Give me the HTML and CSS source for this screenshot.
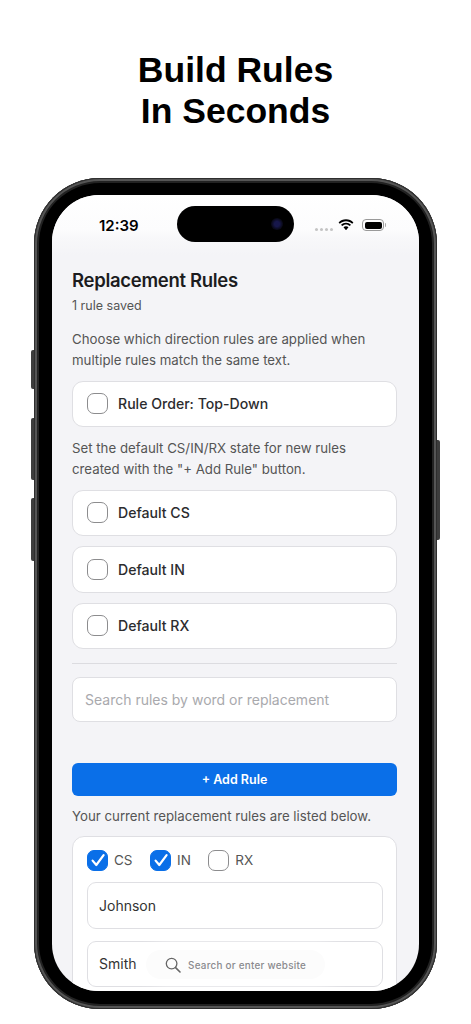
FILE: index.html
```html
<!DOCTYPE html>
<html lang="en">
<head>
<meta charset="utf-8">
<title>Build Rules In Seconds</title>
<link rel="stylesheet" href="styles.css">
</head>
<body>
<h1 class="headline">Build Rules<br>In Seconds</h1>
<div class="phone">
  <span class="side-btn btn-action"></span>
  <span class="side-btn btn-up"></span>
  <span class="side-btn btn-down"></span>
  <span class="side-btn btn-power"></span>
  <div class="bezel">
    <div class="screen">
      <div class="island"><span class="lens"></span></div>
      <div class="statusbar">
        <span class="time">12:39</span>
        <div class="status-right">
          <span class="signal"><i></i><i></i><i></i><i></i></span>
          <svg class="wifi" viewBox="0 0 16 12" width="16" height="12"><path d="M8 2.200c2.400 0 4.600.9 6.200 2.500l1.200-1.300C13.500 1.400 10.900.3 8 .3S2.500 1.400.6 3.400l1.200 1.300C3.400 3.100 5.600 2.200 8 2.200z"/><path d="M8 5.600c1.400 0 2.800.6 3.800 1.500l1.200-1.300C11.700 4.500 9.900 3.700 8 3.700s-3.700.8-5 2.100l1.200 1.300c1-.9 2.400-1.500 3.800-1.500z"/><path d="M8 7.200c-1 0-1.800.4-2.500 1L8 11.300l2.500-3.100c-.7-.6-1.500-1-2.500-1z"/></svg>
          <span class="battery"><span class="battery-fill"></span></span>
        </div>
      </div>
      <main class="content">
        <h2 class="title">Replacement Rules</h2>
        <p class="saved">1 rule saved</p>
        <p class="desc">Choose which direction rules are applied when multiple rules match the same text.</p>
        <label class="option"><span class="box"></span>Rule Order: Top-Down</label>
        <p class="desc desc-set">Set the default CS/IN/RX state for new rules<br>created with the "+ Add Rule" button.</p>
        <div class="options">
          <label class="option"><span class="box"></span>Default CS</label>
          <label class="option"><span class="box"></span>Default IN</label>
          <label class="option"><span class="box"></span>Default RX</label>
        </div>
        <hr class="rule">
        <div class="search-field">Search rules by word or replacement</div>
        <button class="add">+ Add Rule</button>
        <p class="desc desc-list">Your current replacement rules are listed below.</p>
        <section class="rule-card">
          <div class="flags">
            <span class="flag"><span class="box small on"><svg viewBox="0 0 16 16" width="16" height="16"><path d="M2.600 8.600 6.300 13 13.600 3.200" fill="none" stroke="#fff" stroke-width="2.200" stroke-linecap="round" stroke-linejoin="round"/></svg></span>CS</span>
            <span class="flag"><span class="box small on"><svg viewBox="0 0 16 16" width="16" height="16"><path d="M2.600 8.600 6.300 13 13.600 3.200" fill="none" stroke="#fff" stroke-width="2.200" stroke-linecap="round" stroke-linejoin="round"/></svg></span>IN</span>
            <span class="flag"><span class="box small"></span>RX</span>
          </div>
          <div class="value">Johnson</div>
          <div class="value">Smith</div>
        </section>
      </main>
      <div class="url-bar">
        <svg class="magnifier" viewBox="0 0 16 16" width="16" height="16"><circle cx="6.600" cy="6.600" r="5.300" fill="none" stroke="#666" stroke-width="1.300"/><path d="M10.600 10.600 15 15" stroke="#666" stroke-width="1.600" stroke-linecap="round"/></svg>
        <span>Search or enter website</span>
      </div>
    </div>
  </div>
</div>
</body>
</html>
```
FILE: styles.css
```css
* { box-sizing: border-box; }
html, body { margin: 0; padding: 0; }
body {
  width: 471px;
  height: 1024px;
  overflow: hidden;
  background: #fff;
  font-family: Inter, "Liberation Sans", sans-serif;
  color: #1c1c1e;
}
.headline {
  margin: 0;
  padding-top: 50px;
  height: 178px;
  text-align: center;
  font-family: "Liberation Sans", Arial, sans-serif;
  font-size: 35.500px;
  line-height: 41px;
  font-weight: 700;
  color: #000;
}
.phone {
  position: relative;
  margin-left: 34px;
  width: 403px;
  height: 831px;
}
.bezel {
  width: 100%;
  height: 100%;
  padding: 17px 18px 18px;
  border-radius: 66px;
  background: #000;
  box-shadow: inset 0 0 0 1px #2e2e2e, inset 0 0 0 3px #555, inset 0 0 0 5px #222;
}
.side-btn {
  position: absolute;
  width: 3px;
  left: -3px;
  background: #3d3d3d;
  border-radius: 2px 0 0 2px;
}
.btn-action { top: 172px; height: 39px; }
.btn-up { top: 240px; height: 62px; }
.btn-down { top: 320px; height: 63px; }
.btn-power { left: 403px; top: 262px; height: 100px; border-radius: 0 2px 2px 0; }
.screen {
  position: relative;
  width: 367px;
  height: 796px;
  border-radius: 47px;
  overflow: hidden;
  background: #f4f4f7;
}
.island {
  position: absolute;
  top: 11px;
  left: 125px;
  width: 117px;
  height: 36px;
  border-radius: 18px;
  background: #000;
}
.lens {
  position: absolute;
  top: 12px;
  right: 11px;
  width: 12px;
  height: 12px;
  border-radius: 50%;
  background: radial-gradient(circle, #17174a 0 30%, #0b0b1e 60%, #000 100%);
}
.statusbar {
  display: flex;
  justify-content: space-between;
  align-items: center;
  height: 60px;
  padding: 0 35px 0 47px;
  background: linear-gradient(#fff 0, #fcfcfd 34px, #f8f8fa 42px, #f4f4f7 60px);
}
.time {
  font-size: 15px;
  font-weight: 600;
  color: #000;
}
.status-right { display: flex; align-items: center; }
.signal { display: flex; gap: 2px; margin-right: 5px; margin-top: 8px; }
.signal i { width: 3px; height: 3px; border-radius: 50%; background: #c4c4c4; }
.wifi { fill: #000; margin-right: 8px; }
.battery {
  position: relative;
  width: 22px;
  height: 12px;
  padding: 1.500px;
  border: 1px solid #9a9a9a;
  border-radius: 4px;
}
.battery::after {
  content: "";
  position: absolute;
  right: -3px;
  top: 3px;
  width: 1.500px;
  height: 4px;
  border-radius: 0 1px 1px 0;
  background: #aaa;
}
.battery-fill { display: block; width: 100%; height: 100%; border-radius: 2px; background: #000; }
.content { padding: 13px 22px 0 20px; }
.title {
  margin: 0;
  font-size: 18.500px;
  line-height: 24px;
  font-weight: 600;
  letter-spacing: -0.300px;
  color: #1c1c1e;
}
.saved {
  margin: 5px 0 0;
  font-size: 12.500px;
  line-height: 18px;
  color: #555;
}
.desc {
  margin: 14px 0 9.500px;
  font-size: 13.250px;
  line-height: 21px;
  color: #555;
}
.desc-set { margin: 10.500px 0 10px; }
.desc-list { margin: 10.500px 0 9px; }
.options { display: flex; flex-direction: column; gap: 10px; }
.option {
  display: flex;
  align-items: center;
  gap: 10px;
  height: 46.500px;
  padding: 0 14px;
  background: #fff;
  border: 1px solid #dfdfe3;
  border-radius: 11px;
  font-size: 14.100px;
  font-weight: 500;
  color: #2c2c2e;
}
.box {
  flex: none;
  display: flex;
  align-items: center;
  justify-content: center;
  width: 21px;
  height: 21px;
  border: 1.750px solid #8c8c8e;
  border-radius: 7px;
  background: #fff;
}
.box.on { background: #0a6fe8; border-color: #0a6fe8; }
.rule {
  margin: 13.500px 0 13.500px;
  border: 0;
  height: 1px;
  background: #dcdce0;
}
.search-field {
  display: flex;
  align-items: center;
  height: 44.500px;
  padding: 0 12px;
  background: #fff;
  border: 1px solid #dfdfe3;
  border-radius: 8px;
  font-size: 14px;
  color: #a9a9ad;
}
.add {
  display: block;
  width: 100%;
  height: 33px;
  margin-top: 41px;
  border: 0;
  border-radius: 6px;
  background: #0a6fe8;
  color: #fff;
  font-family: inherit;
  font-size: 12.500px;
  font-weight: 600;
}
.rule-card {
  padding: 12.500px 13px 14px 14px;
  background: #fff;
  border: 1px solid #dfdfe3;
  border-radius: 12px;
}
.flags { display: flex; gap: 17.500px; height: 21px; margin-bottom: 11.500px; }
.flag {
  display: flex;
  align-items: center;
  gap: 6px;
  font-size: 13.500px;
  color: #555;
}
.value {
  display: flex;
  align-items: center;
  height: 46.500px;
  margin-bottom: 12px;
  padding: 0 11px;
  border: 1px solid #dfdfe3;
  border-radius: 9px;
  background: #fff;
  font-size: 14px;
  color: #333;
}
.url-bar {
  position: absolute;
  left: 94px;
  top: 755px;
  width: 179px;
  height: 29px;
  display: flex;
  align-items: center;
  gap: 7px;
  padding-left: 19px;
  border-radius: 15px;
  background: #fcfcfc;
  box-shadow: 8px 0 18px 6px rgba(255, 255, 255, .75);
  font-size: 9.900px;
  font-weight: 500;
  letter-spacing: .25px;
  color: #8a8a8e;
}
```
